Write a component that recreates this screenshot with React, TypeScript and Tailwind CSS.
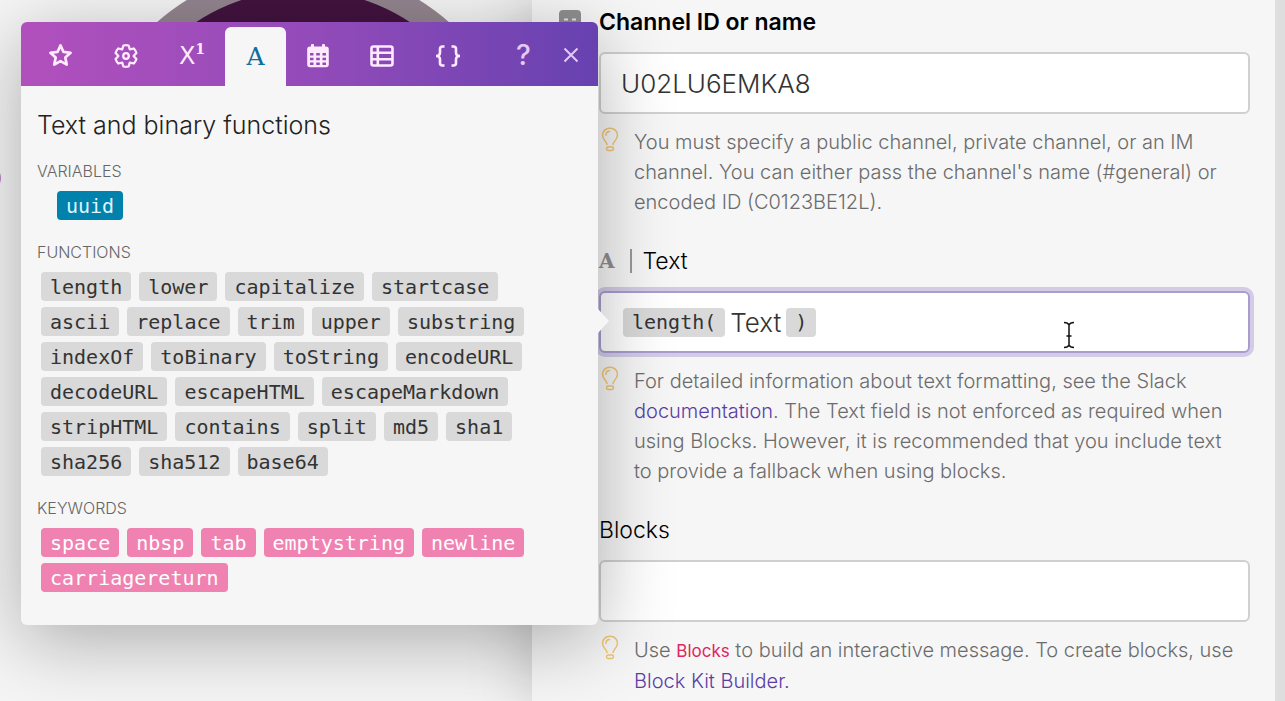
import type { ReactNode } from "react";

const functions = [
  "length",
  "lower",
  "capitalize",
  "startcase",
  "ascii",
  "replace",
  "trim",
  "upper",
  "substring",
  "indexOf",
  "toBinary",
  "toString",
  "encodeURL",
  "decodeURL",
  "escapeHTML",
  "escapeMarkdown",
  "stripHTML",
  "contains",
  "split",
  "md5",
  "sha1",
  "sha256",
  "sha512",
  "base64",
];

const keywords = [
  "space",
  "nbsp",
  "tab",
  "emptystring",
  "newline",
  "carriagereturn",
];

const chipBase =
  "h-[29px] rounded px-[9px] font-['DejaVu_Sans_Mono',monospace] text-[20px] leading-[28px]";
const chipTones = {
  gray: "bg-[#d9d9d9] text-[#333333]",
  blue: "bg-[#0082ad] text-[#dff6ff]",
  pink: "bg-[#f082b2] text-white",
};

function Chip({
  tone,
  children,
}: {
  tone: keyof typeof chipTones;
  children: ReactNode;
}) {
  return (
    <button type="button" className={`${chipBase} ${chipTones[tone]}`}>
      {children}
    </button>
  );
}

function StarIcon() {
  return (
    <svg width="25" height="25" viewBox="0 0 26 26" fill="none" stroke="currentColor" strokeWidth="2.800" strokeLinejoin="round">
      <path d="M13 2.500l3.100 6.800 7.400.9-5.500 5 1.500 7.300-6.500-3.700-6.500 3.700L8 15.200l-5.500-5 7.400-.9z" />
    </svg>
  );
}

function GearIcon() {
  return (
    <svg width="26" height="26" viewBox="0 0 26 26" fill="none" stroke="currentColor" strokeWidth="2.300" strokeLinejoin="round">
      <path d="M10.400 2.500Q13 1.900 15.600 2.500L16.800 6.400 20.800 5.500Q22.600 7.400 23.400 10L20.600 13 23.400 16Q22.600 18.600 20.800 20.500L16.800 19.600 15.600 23.500Q13 24.100 10.400 23.500L9.200 19.600 5.200 20.500Q3.400 18.600 2.600 16L5.400 13 2.600 10Q3.400 7.400 5.200 5.500L9.200 6.400z" />
      <circle cx="13" cy="13" r="2.800" />
    </svg>
  );
}

function CalendarIcon() {
  return (
    <svg width="24" height="26" viewBox="0 0 24 26" fill="currentColor">
      <rect x="5" y="1" width="3" height="6" rx="1" />
      <rect x="16" y="1" width="3" height="6" rx="1" />
      <path
        fillRule="evenodd"
        d="M4 3.500h16a2.800 2.800 0 0 1 2.800 2.800v15.200a2.800 2.800 0 0 1-2.800 2.800H4a2.800 2.800 0 0 1-2.800-2.800V6.300a2.800 2.800 0 0 1 2.800-2.800zM4 10v2.500h3.500V10zm6.200 0v2.500h3.600V10zm6.300 0v2.500H20V10zM4 14.800v2.500h3.500v-2.500zm6.200 0v2.500h3.600v-2.500zm6.300 0v2.500H20v-2.500zM4 19.500V22h3.500v-2.500zm6.200 0V22h3.600v-2.500zm6.300 0V22H20v-2.500z"
      />
    </svg>
  );
}

function TableIcon() {
  return (
    <svg width="26" height="24" viewBox="0 0 26 24" fill="none" stroke="currentColor" strokeWidth="2.600">
      <rect x="2.500" y="2.500" width="21" height="19" rx="2" />
      <path d="M2.500 8.800h21M2.500 15.200h21M8.800 2.500v19" />
    </svg>
  );
}

function BracesIcon() {
  return (
    <svg width="28" height="24" viewBox="0 0 28 24" fill="none" stroke="currentColor" strokeWidth="2.600">
      <path d="M10.500 2.500H8.500Q6 2.500 6 5v3.500Q6 12 2 12q4 0 4 3.500V19q0 2.500 2.500 2.500h2" />
      <path d="M17.500 2.500h2Q22 2.500 22 5v3.500Q22 12 26 12q-4 0-4 3.500V19q0 2.500-2.500 2.500h-2" />
    </svg>
  );
}

function CloseIcon() {
  return (
    <svg width="16" height="16" viewBox="0 0 16 16" fill="none" stroke="currentColor" strokeWidth="2">
      <path d="M1.500 1.500l13 13M14.500 1.500l-13 13" />
    </svg>
  );
}

function BulbIcon() {
  return (
    <svg width="18" height="26" viewBox="0 0 18 26" fill="none" stroke="#f2c572" strokeWidth="1.500" strokeLinecap="round" strokeLinejoin="round">
      <path d="M6 17.500c0-2.800-4.500-4.500-4.500-9.200A7.200 7.200 0 0 1 9 1.200a7.200 7.200 0 0 1 7.500 7.100c0 4.700-4.500 6.400-4.500 9.200" />
      <path d="M5 8.200c0-2 1.500-3.600 3.500-3.700" />
      <rect x="5.500" y="20" width="7" height="3.500" rx="1.700" />
    </svg>
  );
}

function MapIcon() {
  return (
    <svg width="22" height="22" viewBox="0 0 22 22">
      <rect width="22" height="22" rx="4" fill="#8f8f8f" />
      <path d="M5 9.500h4M13 9.500h4" fill="none" stroke="#e4e4e4" strokeWidth="2" />
    </svg>
  );
}

function TextCursor() {
  return (
    <svg width="14" height="28" viewBox="0 0 14 28" fill="none" stroke="#111111" strokeWidth="1.500">
      <path d="M2 1.500q4 0 5 2.500 1-2.500 5-2.500M7 4v20M2 26.500q4 0 5-2.500 1 2.500 5 2.500M4.500 15h5" />
    </svg>
  );
}

function Tab({
  label,
  className,
  children,
}: {
  label: string;
  className: string;
  children: ReactNode;
}) {
  return (
    <button
      type="button"
      aria-label={label}
      className={`flex items-center justify-center ${className}`}
    >
      {children}
    </button>
  );
}

function SectionTitle({ children }: { children: ReactNode }) {
  return (
    <h3 className="mt-5 mb-2 text-[16px] leading-6 font-light text-[#666666]">
      {children}
    </h3>
  );
}

function FunctionPicker() {
  return (
    <section className="absolute top-[22px] left-[21px] w-[577px] rounded-md bg-[#f6f6f6] shadow-[0_16px_76px_rgba(0,0,0,0.3)]">
      <div className="flex h-16 rounded-t-md bg-linear-to-r from-[#b150bd] via-[#934bb9] to-[#6741b0] pt-[5px] pr-1 pl-[6px] text-[#ffeaff]">
        <Tab label="Favorites" className="w-[66px] pb-[2px]">
          <StarIcon />
        </Tab>
        <Tab label="General functions" className="w-[66px] pb-[2px]">
          <GearIcon />
        </Tab>
        <Tab
          label="Math functions"
          className="w-[66px] pb-[2px] font-['DejaVu_Serif',serif] text-[24px] leading-8"
        >
          <span className="font-['DejaVu_Sans',sans-serif]">X</span>
          <sup className="text-[14px] font-bold">1</sup>
        </Tab>
        <Tab
          label="Text and binary functions"
          className="w-[61px] rounded-t-md bg-[#f6f6f6] font-['DejaVu_Serif',serif] text-[25px] text-[#0e6ea0]"
        >
          A
        </Tab>
        <Tab label="Date and time" className="w-16 pb-[2px]">
          <CalendarIcon />
        </Tab>
        <Tab label="Arrays" className="w-16 pb-[2px]">
          <TableIcon />
        </Tab>
        <Tab label="Custom functions" className="w-[68px] pb-[2px]">
          <BracesIcon />
        </Tab>
        <Tab
          label="Help"
          className="ml-auto w-[47px] pb-1 text-[28px] leading-8 font-medium text-[#e6c8f5]"
        >
          ?
        </Tab>
        <Tab label="Close" className="w-[47px] pb-1 text-[#e6c8f5]">
          <CloseIcon />
        </Tab>
      </div>

      <div className="px-4 pt-[25px] pb-[33px]">
        <h2 className="text-[25px] leading-7 font-light text-[#222222]">
          Text and binary functions
        </h2>
        <SectionTitle>VARIABLES</SectionTitle>
        <div className="flex pl-5">
          <Chip tone="blue">uuid</Chip>
        </div>
        <SectionTitle>FUNCTIONS</SectionTitle>
        <div className="flex flex-wrap gap-x-2 gap-y-[6px] pr-5 pl-1">
          {functions.map((name) => (
            <Chip key={name} tone="gray">
              {name}
            </Chip>
          ))}
        </div>
        <SectionTitle>KEYWORDS</SectionTitle>
        <div className="flex flex-wrap gap-x-2 gap-y-[6px] pr-5 pl-1">
          {keywords.map((name) => (
            <Chip key={name} tone="pink">
              {name}
            </Chip>
          ))}
        </div>
      </div>

      <svg
        className="absolute top-[287px] left-full"
        width="11"
        height="24"
        viewBox="0 0 11 24"
      >
        <path d="M0 0l11 12L0 24z" fill="#f6f6f6" />
      </svg>
    </section>
  );
}

function Hint({ children }: { children: ReactNode }) {
  return (
    <div className="mt-[13px] flex gap-[15px] pr-[10px] pl-[2px]">
      <div className="w-[18px] shrink-0">
        <BulbIcon />
      </div>
      <p className="text-[20px] leading-[30px] font-light text-[#6c6c6c]">
        {children}
      </p>
    </div>
  );
}

const inputClass =
  "mt-[15px] block h-[62px] w-full rounded-md border-2 border-[#d0d0d0] bg-white px-5 text-[26px] font-light text-[#333333] outline-none";

export default function App() {
  return (
    <main className="relative flex h-screen overflow-hidden bg-[#f5f5f5] font-['Inter',sans-serif]">
      <div className="relative w-[532px] shrink-0">
        <svg className="absolute inset-0" width="532" height="420" viewBox="0 0 532 420">
          <circle cx="303" cy="188" r="221" fill="#93858f" />
          <circle cx="303" cy="184" r="194" fill="#42133f" />
          <circle cx="-12" cy="178" r="13" fill="#b980c4" />
        </svg>
      </div>

      <form className="relative min-w-0 flex-1 bg-[#f6f6f6] pt-[7px] pr-[25px] pl-[27px] shadow-[0_0_60px_rgba(0,0,0,0.22)]">
        <div className="grid grid-cols-[40px_minmax(0,1fr)] gap-y-[29px]">
          <div className="pt-[3px]">
            <MapIcon />
          </div>
          <div>
            <label
              htmlFor="channel"
              className="block text-[23px] leading-[30px] font-semibold text-black"
            >
              Channel ID or name
            </label>
            <input
              id="channel"
              type="text"
              defaultValue="U02LU6EMKA8"
              className={inputClass}
            />
            <Hint>
              You must specify a public channel, private channel, or an IM
              channel. You can either pass the channel's name (#general) or
              encoded ID (C0123BE12L).
            </Hint>
          </div>

          <div className="col-start-2">
            <div className="flex h-[30px] items-center">
              <span className="font-['DejaVu_Serif',serif] text-[20px] leading-[30px] font-bold text-[#8f8f8f]">
                A
              </span>
              <span className="ml-[15px] h-6 border-l-2 border-[#999999] pl-[11px]" />
              <span
                id="text-label"
                className="text-[23px] leading-[30px] font-light text-black"
              >
                Text
              </span>
            </div>
            <div
              role="textbox"
              aria-labelledby="text-label"
              contentEditable
              suppressContentEditableWarning
              className="mt-[15px] flex h-[62px] items-center gap-[5px] rounded-md border-2 border-[#a79dcf] bg-white px-[22px] text-[26px] font-light text-[#333333] ring-4 ring-[#d2cce6] outline-none"
            >
              <span className={`${chipBase} ${chipTones.gray}`}>length(</span>
              <span>Text</span>
              <span className={`${chipBase} ${chipTones.gray}`}>)</span>
            </div>
            <Hint>
              For detailed information about text formatting, see the Slack{" "}
              <a href="#documentation" className="text-[#5a3ea6]">
                documentation
              </a>
              . The Text field is not enforced as required when using Blocks.
              However, it is recommended that you include text to provide a
              fallback when using blocks.
            </Hint>
          </div>

          <div className="col-start-2">
            <label
              htmlFor="blocks"
              className="block text-[23px] leading-[30px] font-light text-black"
            >
              Blocks
            </label>
            <input id="blocks" type="text" className={inputClass} />
            <Hint>
              Use <span className="text-[17px] font-normal text-[#e0265f]">Blocks</span>{" "}
              to build an interactive message. To create blocks, use{" "}
              <a href="#builder" className="text-[#5a3ea6]">
                Block Kit Builder.
              </a>
            </Hint>
          </div>
        </div>
      </form>
      <div className="relative w-[10px] shrink-0 bg-[#dedede]" />

      <FunctionPicker />

      <div className="pointer-events-none absolute top-[321px] left-[1062px]">
        <TextCursor />
      </div>
    </main>
  );
}
